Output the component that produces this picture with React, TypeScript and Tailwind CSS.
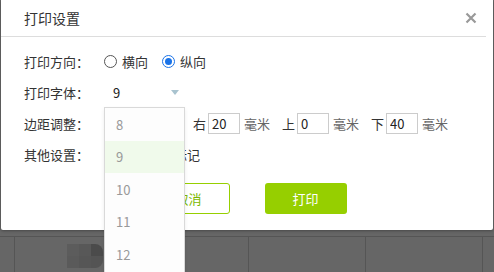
import React from "react";

const font = { fontFamily: '"Noto Sans CJK SC", "Noto Sans", sans-serif' };

function Radio({ checked }: { checked?: boolean }) {
  return (
    <span
      className={
        "flex h-[13px] w-[13px] items-center justify-center rounded-full border bg-white " +
        (checked ? "border-[#1a73e8]" : "border-[#555]")
      }
    >
      {checked && <span className="h-[7px] w-[7px] rounded-full bg-[#1a73e8]" />}
    </span>
  );
}

function MarginInput({ label, value }: { label: string; value: string }) {
  return (
    <div className="flex w-[89px] items-center">
      <span className="w-[15px]">{label}</span>
      <input
        readOnly
        value={value}
        className="h-[21px] w-[32px] border border-[#ccc] px-[3px] text-[13px] text-[#222] outline-none"
      />
      <span className="ml-[4px] text-[#666]">毫米</span>
    </div>
  );
}

export default function App() {
  const sizes = ["8", "9", "10", "11", "12"];

  return (
    <div className="relative h-[272px] w-[494px] overflow-hidden bg-[#666]" style={font}>
      {/* table behind the dialog */}
      <div className="flex h-full pt-[236px]">
        <div className="flex h-full w-full border-t border-[#555]">
          <div className="w-[15px] border-r border-[#555]" />
          <div className="relative w-[234px] border-r border-[#555]">
            <div className="absolute left-[52px] top-[7px] flex flex-col overflow-hidden rounded-r-[8px]">
              <div className="flex">
                <div className="h-[12px] w-[12px] bg-[#5c5c5c]" />
                <div className="h-[12px] w-[12px] bg-[#585858]" />
                <div className="h-[12px] w-[12px] bg-[#4b4b4b]" />
              </div>
              <div className="flex">
                <div className="h-[12px] w-[12px] bg-[#5a5a5a]" />
                <div className="h-[12px] w-[12px] bg-[#565656]" />
                <div className="h-[12px] w-[12px] bg-[#545454]" />
              </div>
            </div>
          </div>
          <div className="w-[117px] border-r border-[#555]" />
          <div className="w-[117px] border-r border-[#555]" />
        </div>
      </div>

      {/* dialog */}
      <div className="absolute left-[1px] top-0 h-[230px] w-[492px] rounded-b-[2px] bg-white shadow-[0_1px_3px_rgba(0,0,0,0.3)]">
        <div className="mr-[7px] flex h-[37px] items-center justify-between border-b border-[#ddd] pl-[23px] pr-[9px]">
          <span className="text-[14px] text-[#333]">打印设置</span>
          <svg width="12" height="12" viewBox="0 0 12 12">
            <path d="M1.5 1.5L10.5 10.5M10.5 1.5L1.5 10.5" stroke="#999" strokeWidth="2.2" />
          </svg>
        </div>

        <div className="flex flex-col pl-[23px] pt-[9px] text-[13px] text-[#333]">
          <div className="flex h-[31px] items-center">
            <span className="w-[80px]">打印方向：</span>
            <label className="flex items-center gap-[5px]">
              <Radio />
              <span>横向</span>
            </label>
            <label className="ml-[14px] flex items-center gap-[5px]">
              <Radio checked />
              <span>纵向</span>
            </label>
          </div>
          <div className="flex h-[31px] items-center">
            <span className="w-[80px]">打印字体：</span>
            <div className="flex w-[80px] items-center justify-between pl-[9px] pr-[5px]">
              <span className="text-[#222]">9</span>
              <svg width="8" height="5" viewBox="0 0 8 5">
                <path d="M0 0H8L4 5Z" fill="#a9c3cf" />
              </svg>
            </div>
          </div>
          <div className="flex h-[31px] items-center">
            <span className="w-[80px]">边距调整：</span>
            <MarginInput label="左" value="20" />
            <MarginInput label="右" value="20" />
            <MarginInput label="上" value="0" />
            <MarginInput label="下" value="40" />
          </div>
          <div className="flex h-[31px] items-center">
            <span className="w-[80px]">其他设置：</span>
            <span className="h-[13px] w-[13px] border border-[#555]" />
            <span className="ml-[5px]">显示页码标记</span>
          </div>
        </div>

        <div className="mt-[13px] flex justify-center gap-[35px] text-[13px]">
          <button className="h-[31px] w-[82px] rounded-[3px] border border-[#96cf00] bg-white text-[#7cb800]">
            取消
          </button>
          <button className="h-[31px] w-[82px] rounded-[3px] bg-[#96cf00] text-white">打印</button>
        </div>
      </div>

      {/* open font size list */}
      <div className="absolute left-[104px] top-[107px] w-[81px] border border-[#d9d9d9] bg-[#fdfdfd] pb-[2px] text-[13px] text-[#999] shadow-[0_2px_4px_rgba(0,0,0,0.08)]">
        {sizes.map((s) => (
          <div
            key={s}
            className={"flex h-[32.5px] items-center pl-[11px] " + (s === "9" ? "bg-[#f0faeb]" : "")}
          >
            {s}
          </div>
        ))}
      </div>
    </div>
  );
}
